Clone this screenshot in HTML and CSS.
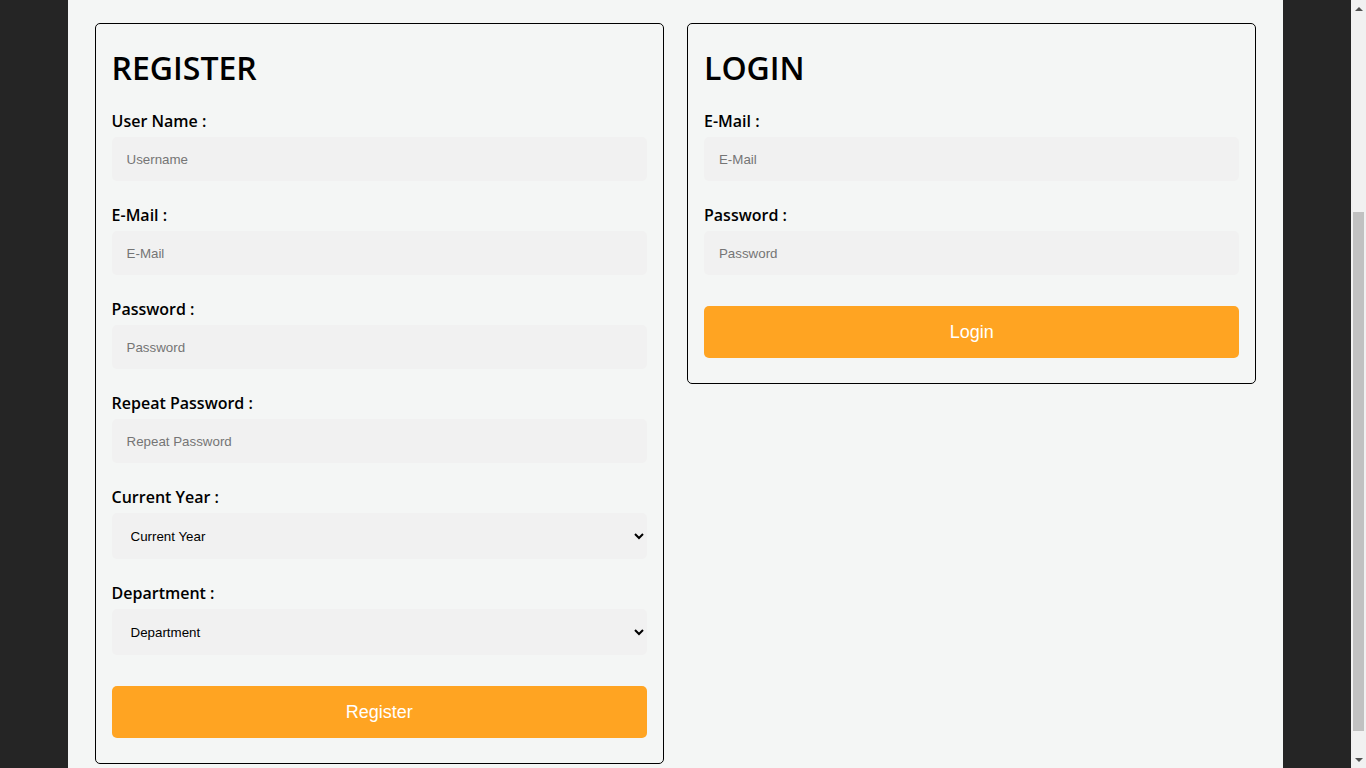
FILE: index.html
```html
<!DOCTYPE html>
<html lang="en">
<head>
<meta charset="utf-8">
<title>Register / Login</title>
<link rel="stylesheet" href="styles.css">
</head>
<body>
<div class="container">
  <div class="top"></div>
  <div class="panels">
    <form class="panel">
      <h2 class="title">REGISTER</h2>
      <label class="label">User Name :</label>
      <input class="field" type="text" placeholder="Username">
      <label class="label">E-Mail :</label>
      <input class="field" type="email" placeholder="E-Mail">
      <label class="label">Password :</label>
      <input class="field" type="password" placeholder="Password">
      <label class="label">Repeat Password :</label>
      <input class="field" type="password" placeholder="Repeat Password">
      <label class="label">Current Year :</label>
      <select class="field select">
        <option>Current Year</option>
      </select>
      <label class="label">Department :</label>
      <select class="field select">
        <option>Department</option>
      </select>
      <button class="btn" type="button">Register</button>
    </form>
    <form class="panel">
      <h2 class="title">LOGIN</h2>
      <label class="label">E-Mail :</label>
      <input class="field" type="email" placeholder="E-Mail">
      <label class="label">Password :</label>
      <input class="field" type="password" placeholder="Password">
      <button class="btn" type="button">Login</button>
    </form>
  </div>
</div>
<div class="scrollbar" aria-hidden="true">
  <span class="sb-btn"><span class="sb-arrow-up"></span></span>
  <span class="sb-track"><span class="sb-thumb"></span></span>
  <span class="sb-btn"><span class="sb-arrow-down"></span></span>
</div>
<script src="script.js"></script>
</body>
</html>
```

FILE: styles.css
```css
html, body {
  margin: 0;
  padding: 0;
}
html::-webkit-scrollbar {
  display: none;
}
body {
  background: #252525;
  font-family: "Open Sans", "Liberation Sans", sans-serif;
  color: #000;
  padding-right: 15px;
}
.container {
  width: 90%;
  margin: 0 auto;
  background: #f4f6f5;
  padding: 0 27px 35px;
  box-sizing: border-box;
}
.top {
  height: 288px;
}
.panels {
  display: grid;
  grid-template-columns: 1fr 1fr;
  column-gap: 23px;
  align-items: start;
  padding-top: 23px;
}
.panel {
  border: 1px solid #000;
  border-radius: 5px;
  padding: 16px 16px 25px;
  display: flex;
  flex-direction: column;
  margin: 0;
}
.title {
  margin: 6px 0 21px;
  font-size: 32px;
  font-weight: 600;
  line-height: 43px;
  color: #000;
}
.label {
  display: block;
  font-size: 16px;
  font-weight: 600;
  line-height: 22px;
  margin-bottom: 5px;
}
.field {
  display: block;
  box-sizing: border-box;
  width: 100%;
  height: 44px;
  margin: 0 0 23px;
  padding: 0 15px;
  border: none;
  border-radius: 5px;
  background: #f1f1f1;
  font-family: "Liberation Sans", Arial, sans-serif;
  font-size: 13.333px;
  color: #000;
  outline: none;
}
.field::placeholder {
  color: #757575;
}
.select {
  height: 46px;
  padding: 0 15px;
}
.btn {
  display: block;
  width: 100%;
  height: 52px;
  margin-top: 8px;
  border: none;
  border-radius: 5px;
  background: #ffa422;
  color: #fff;
  font-family: "Liberation Sans", Arial, sans-serif;
  font-size: 18px;
  cursor: pointer;
}

/* fake classic scrollbar (overlay, fixed to the viewport edge) */
.scrollbar {
  position: fixed;
  top: 0;
  right: 0;
  width: 15px;
  height: 100vh;
  background: #f1f1f1;
  display: flex;
  flex-direction: column;
}
.sb-btn {
  height: 17px;
  flex: none;
  display: flex;
  align-items: center;
  justify-content: center;
}
.sb-arrow-up {
  width: 0;
  height: 0;
  border-left: 4px solid transparent;
  border-right: 4px solid transparent;
  border-bottom: 4px solid #505050;
}
.sb-arrow-down {
  width: 0;
  height: 0;
  border-left: 4px solid transparent;
  border-right: 4px solid transparent;
  border-top: 4px solid #505050;
}
.sb-track {
  flex: 1;
  display: flex;
  flex-direction: column;
  padding: 0 2px;
}
.sb-thumb {
  margin-top: 195px;
  height: 519px;
  background: #c1c1c1;
}
```

FILE: script.js
```js
window.scrollTo(0, 288);
window.addEventListener('load', function () { window.scrollTo(0, 288); });
```
